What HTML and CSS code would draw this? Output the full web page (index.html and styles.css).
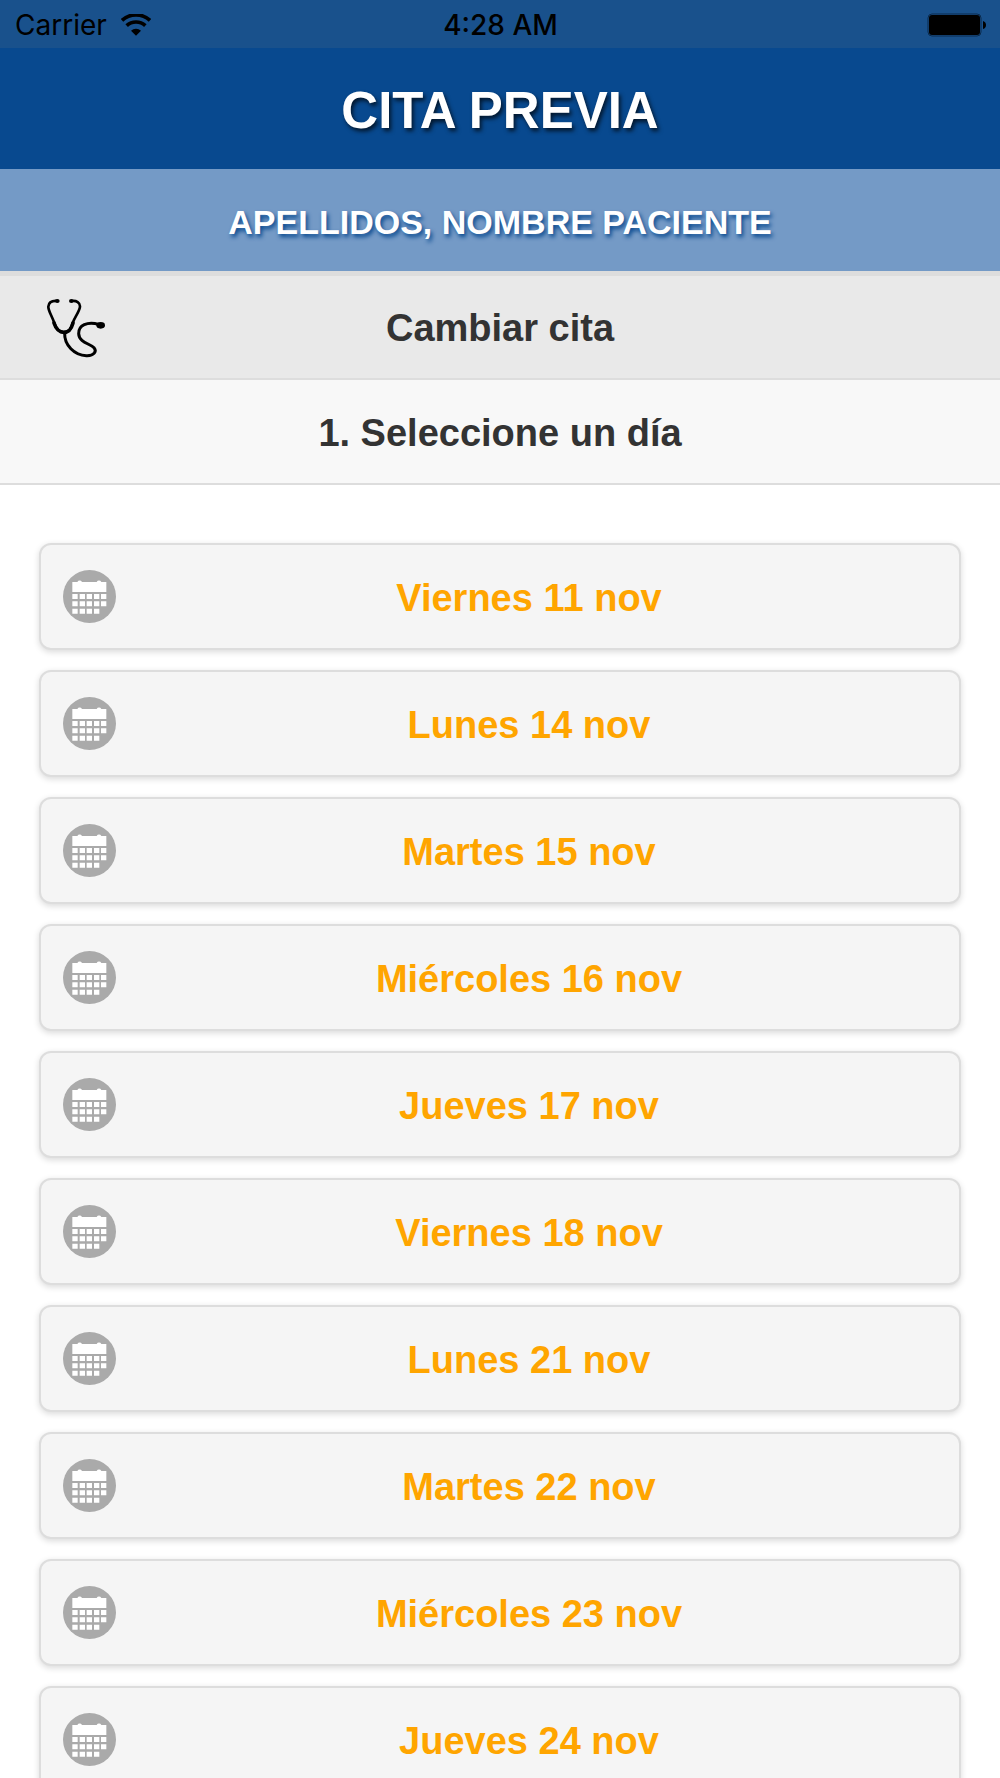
FILE: index.html
```
<!DOCTYPE html>
<html lang="es">
<head>
  <meta charset="UTF-8">
  <meta name="viewport" content="width=device-width, initial-scale=1.0">
  <title>Cita previa</title>
  <link rel="stylesheet" href="styles.css">
</head>
<body>
  <svg class="sprite" aria-hidden="true">
    <symbol id="calendar" viewBox="0 0 159 159">
      <circle cx="79.5" cy="79.5" r="79.5" fill="#aaa"/>
      <g fill="#fff">
        <path d="M28 36h15a8 8 0 0 1 14 0h44a8 8 0 0 1 14 0h15v30H28z"/>
        <path d="M28 72h16v15H28zM50 72h16v15H50zM71 72h16v15H71zM93 72h16v15H93zM114 72h16v15h-16z"/>
        <path d="M28 94h16v15H28zM50 94h16v15H50zM71 94h16v15H71zM93 94h16v15H93zM114 94h16v15h-16z"/>
        <path d="M28 116h16v15H28zM50 116h16v15H50zM71 116h16v15H71zM93 116h16v15H93z"/>
      </g>
    </symbol>
  </svg>

  <div class="status-bar">
    <div class="carrier">
      <span>Carrier</span>
      <svg class="wifi" viewBox="0 0 90 66" aria-hidden="true">
        <path d="M3 19a62 62 0 0 1 84 0M17 35a41 41 0 0 1 56 0" fill="none" stroke="#000" stroke-width="11"/>
        <path d="M45 65L30 50a22 22 0 0 1 30 0z"/>
      </svg>
    </div>
    <span class="clock">4:28 AM</span>
    <svg class="battery" viewBox="0 0 59 24" aria-hidden="true">
      <rect x="1" y="1" width="53" height="22" rx="4" fill="none" stroke="#0a2a4c"/>
      <rect x="2" y="2" width="51" height="20" rx="3"/>
      <path d="M56 8q3 1 3 4t-3 4z"/>
    </svg>
  </div>

  <header class="header">
    <h1>CITA PREVIA</h1>
  </header>
  <div class="patient">APELLIDOS, NOMBRE PACIENTE</div>

  <div class="section-bar">
    <svg class="stethoscope" viewBox="0 0 180 186" aria-hidden="true">
      <g fill="none" stroke="#000" stroke-linecap="round" stroke-linejoin="round">
        <path d="M33 12C18 11 8 17 7 29C6 40 17 55 25 78C30 96 38 106 54 106C70 106 76 96 80 78C87 58 102 42 102 28C102 17 92 10 77 12" stroke-width="8"/>
        <path d="M24 78C30 96 38 106 54 106C70 106 76 96 81 78" stroke-width="11"/>
        <path d="M56 106C54 145 86 175 121 176C145 177 153 163 144 152C133 140 99 137 98 110C97 85 124 72 158 82" stroke-width="9"/>
      </g>
      <ellipse cx="34" cy="12" rx="7" ry="6"/>
      <ellipse cx="76" cy="12" rx="7" ry="6"/>
      <ellipse cx="164" cy="85" rx="13" ry="10"/>
    </svg>
    <h2>Cambiar cita</h2>
  </div>
  <div class="step-bar">
    <h2>1. Seleccione un día</h2>
  </div>

  <ul class="days">
    <li><a href="#"><svg aria-hidden="true"><use href="#calendar"/></svg><span>Viernes 11 nov</span></a></li>
    <li><a href="#"><svg aria-hidden="true"><use href="#calendar"/></svg><span>Lunes 14 nov</span></a></li>
    <li><a href="#"><svg aria-hidden="true"><use href="#calendar"/></svg><span>Martes 15 nov</span></a></li>
    <li><a href="#"><svg aria-hidden="true"><use href="#calendar"/></svg><span>Miércoles 16 nov</span></a></li>
    <li><a href="#"><svg aria-hidden="true"><use href="#calendar"/></svg><span>Jueves 17 nov</span></a></li>
    <li><a href="#"><svg aria-hidden="true"><use href="#calendar"/></svg><span>Viernes 18 nov</span></a></li>
    <li><a href="#"><svg aria-hidden="true"><use href="#calendar"/></svg><span>Lunes 21 nov</span></a></li>
    <li><a href="#"><svg aria-hidden="true"><use href="#calendar"/></svg><span>Martes 22 nov</span></a></li>
    <li><a href="#"><svg aria-hidden="true"><use href="#calendar"/></svg><span>Miércoles 23 nov</span></a></li>
    <li><a href="#"><svg aria-hidden="true"><use href="#calendar"/></svg><span>Jueves 24 nov</span></a></li>
  </ul>
</body>
</html>
```
FILE: styles.css
```
* {
  box-sizing: border-box;
}

body {
  margin: 0;
  background-color: #fff;
  color: #333;
  font-family: "Liberation Sans", Helvetica, Arial, sans-serif;
}

h1, h2 {
  margin: 0;
}

.sprite {
  display: none;
}

/* status bar */
.status-bar {
  display: grid;
  grid-template-columns: 1fr auto 1fr;
  align-items: center;
  height: 48px;
  padding: 2px 14px 0 15px;
  background-color: #19518c;
  color: #000;
  font-family: Inter, Roboto, sans-serif;
  font-size: 28px;
}

.carrier {
  display: flex;
  align-items: center;
  gap: 14px;
}

.wifi {
  width: 30px;
  height: 22px;
}

.clock {
  font-weight: 500;
}

.battery {
  justify-self: end;
  width: 59px;
  height: 24px;
}

/* header */
.header {
  padding: 33px 0 28px;
  background-color: #08498f;
  color: #fff;
  text-align: center;
}

.header h1 {
  font-size: 51px;
  line-height: 60px;
  text-shadow: 2px 3px 4px rgba(0, 0, 0, 0.7);
}

.patient {
  padding: 33px 0 29px;
  background-color: #749ac6;
  color: #fff;
  font-size: 34px;
  font-weight: bold;
  line-height: 40px;
  text-align: center;
  text-shadow: 2px 3px 4px #08498f;
}

.section-bar,
.step-bar {
  position: relative;
  border-bottom: 2px solid #ddd;
  text-align: center;
}

.section-bar {
  padding: 30px 0 28px;
  border-top: 5px solid #ddd;
  background-color: #e9e9e9;
}

.step-bar {
  padding: 31px 0 28px;
  background-color: #f8f8f8;
}

.section-bar h2,
.step-bar h2 {
  font-size: 38px;
  line-height: 44px;
}

.stethoscope {
  position: absolute;
  top: 21px;
  left: 46px;
  width: 60px;
  height: 62px;
}

/* days list */
.days {
  display: flex;
  flex-direction: column;
  gap: 20px;
  margin: 0;
  padding: 58px 39px 0;
  list-style: none;
}

.days a {
  display: flex;
  align-items: center;
  height: 107px;
  padding: 0 22px;
  border: 2px solid #ddd;
  border-radius: 12px;
  background-color: #f5f5f5;
  box-shadow: 0 2px 6px rgba(0, 0, 0, 0.15);
  color: orange;
  font-size: 38px;
  font-weight: bold;
  text-decoration: none;
}

.days svg {
  flex: none;
  width: 53px;
  height: 53px;
}

.days span {
  flex: 1;
  padding: 3px 0 0 5px;
  text-align: center;
}
```
